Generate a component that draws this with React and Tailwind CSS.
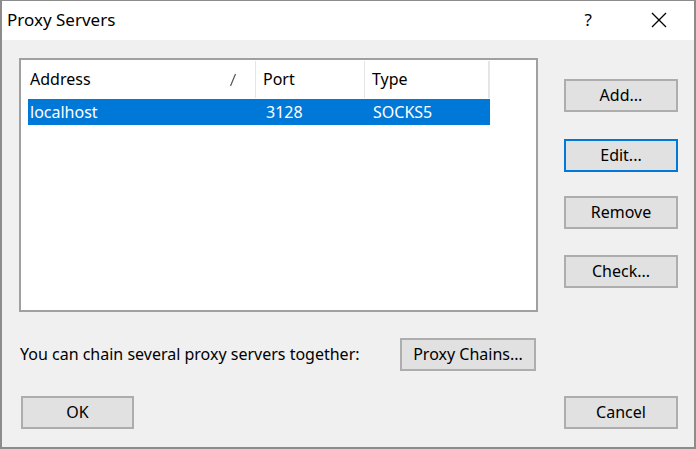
import React from "react";

const font = { fontFamily: '"Noto Sans", "Open Sans", sans-serif' };

function Btn({ children, className = "", focused = false }) {
  return (
    <div
      className={
        "flex items-center justify-center h-[33px] bg-[#e1e1e1] text-[16px] text-black " +
        (focused ? "border-2 border-[#0078d7] " : "border-2 border-[#adadad] ") +
        className
      }
    >
      <span className="pb-[2px]">{children}</span>
    </div>
  );
}

export default function App() {
  return (
    <div
      style={font}
      className="w-[696px] h-[449px] bg-[#f0f0f0] border-t border-l-2 border-r-2 border-b-2 border-[#8c8c8c] flex flex-col overflow-hidden"
    >
      {/* title bar */}
      <div className="h-[39px] bg-white flex items-center shrink-0">
        <div className="pl-[5px] text-[17px] text-black leading-none pb-[2px]">Proxy Servers</div>
        <div className="flex-1" />
        <div className="text-[17px] text-black mr-[59px] leading-none pb-[2px]">?</div>
        <svg width="16" height="16" viewBox="0 0 16 16" className="mr-[27px] mb-[1px]">
          <path d="M1 1 L15 15 M15 1 L1 15" stroke="#000" strokeWidth="1.3" />
        </svg>
      </div>

      {/* body */}
      <div className="flex flex-col pl-[17px] pt-[18px]">
        <div className="flex">
          {/* list box */}
          <div className="w-[519px] h-[254px] bg-white border-2 border-[#a0a0a0] flex flex-col">
            <div className="h-[39px] flex items-stretch text-[16px] text-black">
              <div className="w-[235px] flex items-center justify-between pl-[9px] pr-[18px] border-r border-[#e5e5e5] my-[1px]">
                <span className="pb-[2px]">Address</span>
                <svg width="8" height="14" viewBox="0 0 8 14">
                  <path d="M6.5 1 L1.5 13" stroke="#555" strokeWidth="1.2" />
                </svg>
              </div>
              <div className="w-[109px] flex items-center pl-[7px] border-r border-[#e5e5e5] my-[1px]">
                <span className="pb-[2px]">Port</span>
              </div>
              <div className="w-[125px] flex items-center pl-[7px] border-r-2 border-[#e5e5e5] my-[1px]">
                <span className="pb-[2px]">Type</span>
              </div>
            </div>
            <div className="ml-[7px] w-[462px] h-[26px] bg-[#0078d7] flex items-center text-white text-[16px]">
              <div className="w-[228px] pl-[2px] pb-[1px]">localhost</div>
              <div className="w-[109px] pl-[10px] pb-[1px]">3128</div>
              <div className="w-[125px] pl-[8px] pb-[1px]">SOCKS5</div>
            </div>
          </div>

          {/* right buttons */}
          <div className="flex flex-col ml-[26px] pt-[21px] w-[114px]">
            <Btn>Add...</Btn>
            <Btn focused className="mt-[27px]">Edit...</Btn>
            <Btn className="mt-[24px]">Remove</Btn>
            <Btn className="mt-[26px]">Check...</Btn>
          </div>
        </div>

        <div className="flex items-center mt-[26px]">
          <div className="w-[381px] pl-[1px] text-[16px] text-black pb-[1px]">
            You can chain several proxy servers together:
          </div>
          <Btn className="w-[136px]">Proxy Chains...</Btn>
        </div>

        <div className="flex items-center mt-[25px]">
          <Btn className="ml-[2px] w-[113px]">OK</Btn>
          <div className="flex-1" />
          <Btn className="w-[114px] mr-[16px]">Cancel</Btn>
        </div>
      </div>
    </div>
  );
}
